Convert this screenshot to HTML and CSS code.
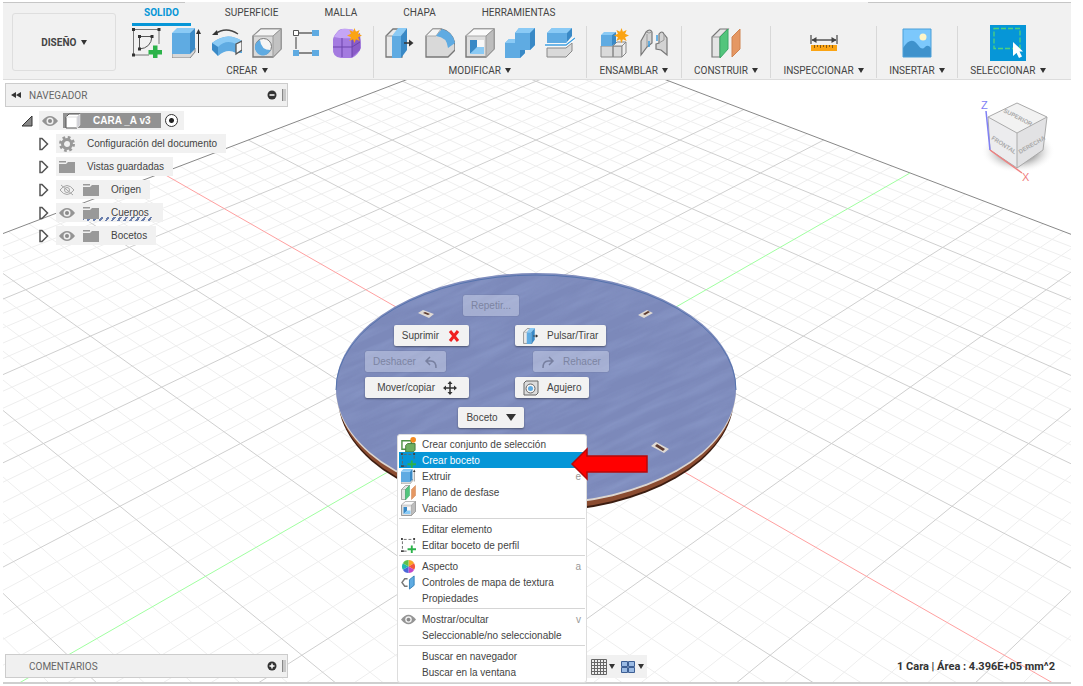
FILE: index.html
```html
<!DOCTYPE html>
<html lang="es">

<head>
  <meta charset="UTF-8">
  <meta name="viewport" content="width=device-width, initial-scale=1.0">

  <title>CARA _A v3</title>
  <link rel="stylesheet" href="styles.css">
</head>

<body>
<!-- Shared icons -->
<svg class="icon-defs" width="0" height="0" aria-hidden="true">
  <symbol id="i-sketch" viewBox="0 0 30 30">
    <path d="M1.500 1.500H27V16M1.500 1.500V27H17" fill="none" stroke="#777"/>
    <path d="M7.500 8.500H20M7.500 8.500V21M20 8.500Q19 20 7.500 21" fill="none" stroke="#555"/>
    <path d="M0 0h3v3H0zM25.500 0h3v3h-3zM0 25.500h3v3H0zM6 7h3v3H6zM18.500 7h3v3h-3zM6 19.500h3v3H6z" fill="#333"/>
    <path d="M21 17.500h4.500V22H30v4.500h-4.500V30H21v-3.500h-4.500V22H21z" fill="#2cb34a"/>
  </symbol>
  <symbol id="i-sketch-small" viewBox="0 0 16 16">
    <path d="M1.500 3.500V13M3 1.500h10M14 3v4M3 14h5" fill="none" stroke="#666" stroke-dasharray="3 2"/>
    <path d="M0 0h2v2H0zM13 0h2v2h-2zM0 13h3v2H0z" fill="#444"/>
    <path d="M10.500 8h2v3H16v2h-3.500V16h-2v-3H7v-2h3.500z" fill="#2cb34a"/>
  </symbol>
  <symbol id="i-extrude" viewBox="0 0 30 30">
    <path d="M0 25h18l5-5v4l-5 6H0z" fill="#d8d8d8" stroke="#888"/>
    <path d="M0 5h18v21H0z" fill="#5fabe2"/>
    <path d="M0 5l5-5h18l-5 5z" fill="#8acaf5"/>
    <path d="M18 5l5-5v21l-5 5z" fill="#3989c6"/>
    <path d="M26.500 25V4" stroke="#333"/>
    <path d="M24 6l2.500-5L29 6z" fill="#333"/>
  </symbol>
  <symbol id="i-hole" viewBox="0 0 30 30">
    <path d="M1 8l8-7h20v20l-8 8H1z" fill="#d9d9d9" stroke="#777" stroke-width="1.400"/>
    <path d="M1 8l8-7h20l-8 7z" fill="#f4f4f4" stroke="#999"/>
    <path d="M21 8l8-7v20l-8 8z" fill="#c2c2c2" stroke="#999"/>
    <circle cx="11.500" cy="18.500" r="8" fill="#f5f5f5" stroke="#777"/>
    <path d="M8 12a8 8 0 1 0 10.500 10Q9 22 8 12z" fill="#5fabe2"/>
  </symbol>
  <symbol id="i-hole-small" viewBox="0 0 16 16">
    <path d="M1 3l2-2h12v12l-2 2H1z" fill="#dcdcdc" stroke="#666"/>
    <circle cx="7.500" cy="8.500" r="4.500" fill="#f5f5f5" stroke="#666"/>
    <circle cx="7.500" cy="8.500" r="2.500" fill="#5fabe2"/>
  </symbol>
  <symbol id="i-press" viewBox="0 0 30 30">
    <path d="M1 8l7-7h9v28H1z" fill="#e9e9e9" stroke="#777" stroke-width="1.300"/>
    <path d="M1 8h7l6-7" fill="none" stroke="#999"/>
    <path d="M7 8h9v22H7z" fill="#5fabe2"/>
    <path d="M7 8l6-8h9l-6 8z" fill="#8acaf5"/>
    <path d="M16 8l6-8v22l-6 8z" fill="#3989c6"/>
    <path d="M19 15h7" stroke="#333" stroke-width="1.500"/>
    <path d="M24 11.500l4.500 3.500-4.500 3.500z" fill="#333"/>
  </symbol>
  <symbol id="i-shell" viewBox="0 0 30 30">
    <path d="M1 8l8-7h20v20l-8 8H1z" fill="#dedede" stroke="#777" stroke-width="1.400"/>
    <path d="M1 8l8-7h20l-8 7z" fill="#fafafa" stroke="#aaa"/>
    <path d="M21 8l8-7v20l-8 8z" fill="#bdbdbd" stroke="#999"/>
    <path d="M5 12h14v14H5z" fill="#f8f8f8"/>
    <path d="M5 12h7v8l-7 6z" fill="#3989c6"/>
    <path d="M12 19h7v7H5z" fill="#8acaf5"/>
  </symbol>
  <symbol id="i-plane" viewBox="0 0 30 30">
    <path d="M1 9l8-8h8L9 9v20H1z" fill="#e4e4e4" stroke="#777" stroke-width="1.200"/>
    <path d="M1 9h8l8-8" fill="none" stroke="#999"/>
    <path d="M9 9l8-8v20l-8 9z" fill="#52c57c" stroke="#3ba866"/>
    <path d="M21 9l8-8v20l-8 8z" fill="#e59763" stroke="#d08350"/>
  </symbol>
  <symbol id="i-eye" viewBox="0 0 16 12">
    <path d="M0 6Q8-4 16 6Q8 16 0 6z" fill="#949494"/>
    <circle cx="8" cy="6" r="3.500" fill="#f0f0f0"/>
    <circle cx="8" cy="6" r="2" fill="#8a8a8a"/>
  </symbol>
  <symbol id="i-eye-off" viewBox="0 0 16 12">
    <path d="M1 6Q8-3 15 6Q8 15 1 6z" fill="none" stroke="#a5a5a5"/>
    <circle cx="8" cy="6" r="2.500" fill="none" stroke="#a5a5a5"/>
    <path d="M2 1l12 10" stroke="#a5a5a5"/>
  </symbol>
  <symbol id="i-folder" viewBox="0 0 16 14">
    <path d="M0 4h7l2-2h7v11H0z" fill="#999"/>
    <path d="M0 1h7v1.500H0z" fill="#999"/>
  </symbol>
  <symbol id="i-expand" viewBox="0 0 12 14">
    <path d="M2 1.500h2L9.500 7 4 12.500H2z" fill="#fff" stroke="#555" stroke-width="1.500"/>
  </symbol>
  <symbol id="i-star" viewBox="0 0 16 16">
    <path d="M8 0l1.500 4L13.500 2l-1.700 4L16 8l-4.200 1.800 1.700 4-4-1.800L8 16l-1.500-4-4 1.800 1.700-4L0 8l4.200-2-1.700-4 4 2z" fill="#fba413"/>
  </symbol>
</svg>

<header class="toolbar">
  <button class="workspace-button">DISEÑO <span class="caret"></span></button>

  <div class="ribbon">
    <nav class="tabs">
      <button class="tab active">SOLIDO</button>
      <button class="tab">SUPERFICIE</button>
      <button class="tab">MALLA</button>
      <button class="tab">CHAPA</button>
      <button class="tab">HERRAMIENTAS</button>
    </nav>

    <div class="groups">
      <div class="group group-wide">
        <div class="tools">
          <button class="tool" aria-label="Crear boceto"><svg><use href="#i-sketch"/></svg></button>
          <button class="tool" aria-label="Extruir"><svg><use href="#i-extrude"/></svg></button>
          <button class="tool" aria-label="Revolución">
            <svg viewBox="0 0 30 30">
              <path d="M0 15Q15 3 30 13V25H24Q15 20 6 28Z" fill="#5fabe2"/>
              <path d="M0 15Q15 3 30 13L24 16Q14 11 6 19Z" fill="#8acaf5"/>
              <path d="M0 15l6 4v9l-6-6z" fill="#3989c6"/>
              <path d="M24 16l6-3v9l-6 4z" fill="#f5f5f5" stroke="#555" stroke-width="1.300"/>
              <path d="M3 6Q14-2 26 6" fill="none" stroke="#444" stroke-width="1.300"/>
              <path d="M0 7l5-5 1 5z" fill="#333"/>
            </svg>
          </button>
          <button class="tool" aria-label="Agujero"><svg><use href="#i-hole"/></svg></button>
          <button class="tool" aria-label="Patrón">
            <svg viewBox="0 0 30 30">
              <path d="M7 5h14M4 9v12M7 25h14" stroke="#666" stroke-width="1.300"/>
              <path d="M1.500 2.500h5v5h-5z" fill="#fff" stroke="#555"/>
              <path d="M20 2h7v6h-7zM1 22h6v6H1zM20 22h7v6h-7z" fill="#5fabe2"/>
            </svg>
          </button>
          <button class="tool" aria-label="Crear forma">
            <svg viewBox="0 0 30 30">
              <path d="M1 11Q2 7 7 2Q10 0 17 1L26 5Q29 10 29 20Q26 27 20 30H9Q0 29 1 20z" fill="#a47be0"/>
              <path d="M2 9Q6 2 10 1h10l7 4-7 5Q10 11 2 9z" fill="#c5a5f5"/>
              <path d="M20 10l8-5q1 8 0 17l-8 7z" fill="#8a5cc8"/>
              <path d="M1 19h19l8-5M10 10v19M20 10v19" fill="none" stroke="#6c45ac"/>
              <use href="#i-star" x="15" y="0" width="15" height="15"/>
            </svg>
          </button>
        </div>
        <button class="group-label">CREAR <span class="caret"></span></button>
      </div>

      <div class="group group-wide">
        <div class="tools">
          <button class="tool" aria-label="Pulsar/Tirar"><svg><use href="#i-press"/></svg></button>
          <button class="tool" aria-label="Empalme">
            <svg viewBox="0 0 30 30">
              <path d="M1 8l7-7h8Q28 4 30 17v5l-7 7H1z" fill="#d9d9d9" stroke="#777" stroke-width="1.300"/>
              <path d="M1 8l7-7h8l-5 7z" fill="#f5f5f5" stroke="#aaa"/>
              <path d="M11 8l6-7Q28 4 30 15l-7 5Q22 9 11 8z" fill="#5fabe2"/>
            </svg>
          </button>
          <button class="tool" aria-label="Vaciado"><svg><use href="#i-shell"/></svg></button>
          <button class="tool" aria-label="Combinar">
            <svg viewBox="0 0 30 30">
              <path d="M0 15l4-4h6V5l4-5h16v17l-5 5h-5v3l-5 5H0z" fill="#5fabe2"/>
              <path d="M0 15l4-4h6v4zM10 5l4-5h16l-5 5z" fill="#8acaf5"/>
              <path d="M25 5l5-5v17l-5 5zM15 22h5v3l-5 5z" fill="#3989c6"/>
            </svg>
          </button>
          <button class="tool" aria-label="Dividir cuerpo">
            <svg viewBox="0 0 30 30">
              <path d="M2 5l5-5h20l-5 5v10H2z" fill="#5fabe2"/>
              <path d="M2 5l5-5h20l-5 5z" fill="#8acaf5"/>
              <path d="M22 5l5-5v8l-5 6z" fill="#3989c6"/>
              <path d="M2 20h19l6-5v8l-6 6H2z" fill="#d9d9d9" stroke="#888"/>
              <path d="M0 17h21l9-7" fill="none" stroke="#fff" stroke-width="3"/>
              <path d="M0 17h21l9-7" fill="none" stroke="#3f9fe0" stroke-width="1.300"/>
            </svg>
          </button>
        </div>
        <button class="group-label">MODIFICAR <span class="caret"></span></button>
      </div>

      <div class="group">
        <div class="tools">
          <button class="tool" aria-label="Nuevo componente">
            <svg viewBox="0 0 30 30">
              <path d="M2 18h12v11H2zM14 18h9v11h-9z" fill="#dadada" stroke="#888"/>
              <path d="M14 18l4-4h9l-4 4zM23 18l4-4v11l-4 4z" fill="#eee" stroke="#888"/>
              <path d="M2 7h11v11H2z" fill="#5fabe2"/>
              <path d="M2 7l3-3h12l-4 3z" fill="#8acaf5"/>
              <path d="M13 7l4-3v11l-4 3z" fill="#3989c6"/>
              <use href="#i-star" x="15" y="0" width="15" height="15"/>
            </svg>
          </button>
          <button class="tool" aria-label="Unión">
            <svg viewBox="0 0 30 30">
              <path d="M2 13L7 4q4-4 6 0v11l-5 4-6 8z" fill="#d3d3d3" stroke="#777" stroke-width="1.200"/>
              <path d="M7 4q3 2 6 0M8 6v13" fill="none" stroke="#999"/>
              <path d="M17 16l3-1V6q3-4 5 0l3 4v17l-6-5-5-1z" fill="#d3d3d3" stroke="#777" stroke-width="1.200"/>
              <path d="M20 15l5-3V6" fill="none" stroke="#999"/>
              <path d="M10 13v6M18 7v6" stroke="#3f9fe0" stroke-width="1.500"/>
            </svg>
          </button>
        </div>
        <button class="group-label">ENSAMBLAR <span class="caret"></span></button>
      </div>

      <div class="group">
        <div class="tools">
          <button class="tool" aria-label="Plano de desfase"><svg><use href="#i-plane"/></svg></button>
        </div>
        <button class="group-label">CONSTRUIR <span class="caret"></span></button>
      </div>

      <div class="group">
        <div class="tools">
          <button class="tool" aria-label="Medir">
            <svg viewBox="0 0 30 30">
              <path d="M2 7v9M28 7v9M3 12h24" stroke="#555" stroke-width="1.300"/>
              <path d="M2.500 12l5-3v6zM27.500 12l-5-3v6z" fill="#444"/>
              <path d="M2 17h26v6H2z" fill="#fba413"/>
              <path d="M5.500 17v3M8.500 17v2M11.500 17v3M14.500 17v2M17.500 17v3M20.500 17v2M23.500 17v3" stroke="#8a5a10"/>
            </svg>
          </button>
        </div>
        <button class="group-label">INSPECCIONAR <span class="caret"></span></button>
      </div>

      <div class="group">
        <div class="tools">
          <button class="tool" aria-label="Insertar imagen">
            <svg viewBox="0 0 30 30">
              <path d="M1 1h28v28H1z" fill="#7cc8fc"/>
              <path d="M1 20Q9 7 16 17q4 6 7 2 3-3 6 1v9H1z" fill="#3f92cc"/>
              <path d="M1 1h28v28H1z" fill="none" stroke="#4b9fd8"/>
              <circle cx="21" cy="9" r="3.500" fill="#fff6c8"/>
            </svg>
          </button>
        </div>
        <button class="group-label">INSERTAR <span class="caret"></span></button>
      </div>

      <div class="group">
        <div class="tools">
          <button class="tool tool-selected" aria-label="Seleccionar">
            <svg viewBox="0 0 36 36">
              <path d="M4 3.500h26v20H4z" fill="none" stroke="#4fd17c" stroke-width="1.300" stroke-dasharray="5 2"/>
              <path d="M23 17v14l3.500-3 2.500 5 3-1.500-2.500-5H33z" fill="#fff"/>
            </svg>
          </button>
        </div>
        <button class="group-label">SELECCIONAR <span class="caret"></span></button>
      </div>
    </div>
  </div>
</header>

<main class="viewport">
  <svg class="scene" viewBox="3 80 1068 602" preserveAspectRatio="xMidYMin slice">
    <defs>
      <!-- wood grain -->
      <filter id="grain" x="0" y="0" width="100%" height="100%">
        <feTurbulence type="fractalNoise" baseFrequency="0.015 0.120" numOctaves="3" seed="4"/>
        <feColorMatrix values="0 0 0 0 0.280  0 0 0 0 0.350  0 0 0 0 0.620  0 1.600 0 0 -0.550"/>
      </filter>
      <clipPath id="disc-clip"><ellipse cx="536" cy="388" rx="200" ry="115"/></clipPath>
    </defs>
    <g id="grid"></g>

    <ellipse cx="536" cy="397" rx="198" ry="115" fill="#3b1c10"/>
    <ellipse cx="536" cy="395" rx="198" ry="115" fill="#8b4c31"/>
    <ellipse cx="536" cy="390" rx="200" ry="115" fill="#ddd6d0"/>
    <ellipse cx="536" cy="388" rx="200" ry="115" fill="#7c89ba"/>
    <g clip-path="url(#disc-clip)">
      <rect x="250" y="180" width="570" height="420" transform="rotate(-24 536 388)" filter="url(#grain)" opacity="0.600"/>
    </g>
    <path d="M336 390A200 115 0 0 1 736 390" fill="none" stroke="#5674ae"/>
    <path d="M418 313l5-3 11 4-5 4zM638 315l9-5 6 3-9 5zM651 446l5-4 13 7-5 4z" fill="#e0dad4"/>
    <path d="M423 313l2-1 5 2-2 1zM643 314l5-3 2 1-5 3zM655 446l2-2 8 5-2 2z" fill="#5d3b30"/>
  </svg>

  <section class="browser">
    <div class="panel-bar">
      <svg class="rewind" viewBox="0 0 10 8"><path d="M5 1v6L0 4zM10 1v6L5 4z" fill="#333"/></svg>
      <span class="panel-title">NAVEGADOR</span>
      <button class="round-button" aria-label="Contraer"><svg viewBox="0 0 10 10"><circle cx="5" cy="5" r="4.500" fill="#333"/><path d="M2.500 5h5" stroke="#fff" stroke-width="1.500"/></svg></button>
      <span class="grip"></span>
    </div>

    <ul class="tree">
      <li class="root">
        <svg class="fold" viewBox="0 0 12 12"><path d="M1 11L11 1v10z" fill="#888" stroke="#333"/></svg>
        <div class="node">
          <svg class="eye"><use href="#i-eye"/></svg>
          <span class="root-name">
            <svg viewBox="0 0 16 16"><path d="M1 4l3-3h11v11l-3 3H1z" fill="#fff" stroke="#555"/><path d="M12 15V4l3-3v11zM1 4h11" fill="#cfcfd6" stroke="#ddd"/></svg>
            CARA _A v3
          </span>
          <input class="activate" type="radio" name="component" aria-label="Activar componente" checked>
        </div>
      </li>
      <li>
        <svg class="fold"><use href="#i-expand"/></svg>
        <div class="node">
          <svg class="gear" viewBox="0 0 16 16"><circle cx="8" cy="8" r="4.500" fill="none" stroke="#999" stroke-width="3"/><circle cx="8" cy="8" r="6.500" fill="none" stroke="#999" stroke-width="3" stroke-dasharray="2.600 2.500"/></svg>
          <span>Configuración del documento</span>
        </div>
      </li>
      <li>
        <svg class="fold"><use href="#i-expand"/></svg>
        <div class="node">
          <svg class="folder"><use href="#i-folder"/></svg>
          <span>Vistas guardadas</span>
        </div>
      </li>
      <li>
        <svg class="fold"><use href="#i-expand"/></svg>
        <div class="node">
          <svg class="eye"><use href="#i-eye-off"/></svg>
          <svg class="folder"><use href="#i-folder"/></svg>
          <span>Origen</span>
        </div>
      </li>
      <li>
        <svg class="fold"><use href="#i-expand"/></svg>
        <div class="node">
          <svg class="eye"><use href="#i-eye"/></svg>
          <span class="hatched">
            <svg class="folder"><use href="#i-folder"/></svg>
            <span>Cuerpos</span>
          </span>
        </div>
      </li>
      <li>
        <svg class="fold"><use href="#i-expand"/></svg>
        <div class="node">
          <svg class="eye"><use href="#i-eye"/></svg>
          <svg class="folder"><use href="#i-folder"/></svg>
          <span>Bocetos</span>
        </div>
      </li>
    </ul>
  </section>

  <svg class="view-cube" viewBox="0 0 80 90">
    <defs>
      <radialGradient id="cube-shadow"><stop offset="0.500" stop-color="#999"/><stop offset="1" stop-color="#fff" stop-opacity="0"/></radialGradient>
    </defs>
    <ellipse cx="41" cy="56" rx="37" ry="22" fill="url(#cube-shadow)" opacity="0.800"/>
    <path d="M40 8l30 14-30 16-29-16z" fill="#f2f2f2"/>
    <path d="M11 22l29 16v35L13 55z" fill="#ececee"/>
    <path d="M40 38l30-16-4 33-26 18z" fill="#e2e2e4"/>
    <path d="M40 8l30 14-30 16-29-16zM40 38v35L13 55 11 22M40 73l26-18 4-33" fill="none" stroke="#aaa"/>
    <path d="M9 16l4 39" stroke="#8080f5" stroke-width="1.500"/>
    <path d="M13 55l32 23" stroke="#f08080" stroke-width="1.500"/>
    <g class="cube-face">
      <text transform="translate(26 17) rotate(27)">SUPERIOR</text>
      <text transform="translate(14 44) rotate(33)">FRONTAL</text>
      <text transform="translate(43 59) rotate(-30)">DERECHA</text>
    </g>
    <text class="axis-z" x="4" y="14">Z</text>
    <text class="axis-x" x="45" y="86">X</text>
  </svg>

  <div class="marking-menu">
    <button class="mark mark-center" disabled>Repetir...</button>
    <button class="mark mark-right">Suprimir <svg viewBox="0 0 14 14"><path d="M3 2l8 10M11 2L3 12" stroke="#f02020" stroke-width="3"/></svg></button>
    <button class="mark"><svg class="mark-icon"><use href="#i-press"/></svg> Pulsar/Tirar</button>
    <button class="mark" disabled>Deshacer <svg viewBox="0 0 14 14"><path d="M6 2L2 6l4 4M2 6h5q5 0 5 7" fill="none" stroke="#777f9f" stroke-width="1.500"/></svg></button>
    <button class="mark mark-indent" disabled><svg viewBox="0 0 14 14"><path d="M8 2l4 4-4 4M12 6H7q-5 0-5 7" fill="none" stroke="#777f9f" stroke-width="1.500"/></svg> Rehacer</button>
    <button class="mark mark-right mark-wide">Mover/copiar <svg viewBox="0 0 14 14"><path d="M7 2v10M2 7h10" stroke="#333" stroke-width="1.500"/><path d="M4.500 3L7 0l2.500 3zM4.500 11L7 14l2.500-3zM3 4.500L0 7l3 2.500zM11 4.500L14 7l-3 2.500z" fill="#333"/></svg></button>
    <button class="mark"><svg class="mark-icon"><use href="#i-hole-small"/></svg> Agujero</button>
    <button class="mark mark-center">Boceto <span class="caret caret-big"></span></button>
  </div>

  <div class="context-menu" role="menu">
    <button role="menuitem">
      <svg viewBox="0 0 16 16"><path d="M1 4h10v9H1z" fill="none" stroke="#4d8f45" stroke-width="1.500"/><path d="M5 9l2-2h8v7l-2 2H5z" fill="#6fae60" stroke="#447a3b"/><circle cx="13" cy="3" r="3" fill="#f58a1f"/></svg>
      Crear conjunto de selección
    </button>
    <button role="menuitem" class="highlighted"><svg><use href="#i-sketch-small"/></svg>Crear boceto</button>
    <button role="menuitem"><svg><use href="#i-extrude"/></svg>Extruir<kbd>e</kbd></button>
    <button role="menuitem"><svg><use href="#i-plane"/></svg>Plano de desfase</button>
    <button role="menuitem"><svg><use href="#i-shell"/></svg>Vaciado</button>
    <hr>
    <button role="menuitem" class="no-icon">Editar elemento</button>
    <button role="menuitem"><svg><use href="#i-sketch-small"/></svg>Editar boceto de perfil</button>
    <hr>
    <button role="menuitem">
      <svg viewBox="0 0 16 16"><path d="M8 8V1a7 7 0 0 1 6 3.500z" fill="#f9a825"/><path d="M8 8l6-3.500a7 7 0 0 1 0 7z" fill="#f4573b"/><path d="M8 8l6 3.500A7 7 0 0 1 8 15z" fill="#c147c9"/><path d="M8 8v7a7 7 0 0 1-6-3.500z" fill="#4b66d8"/><path d="M8 8l-6 3.500a7 7 0 0 1 0-7z" fill="#22b8b0"/><path d="M8 8L2 4.500A7 7 0 0 1 8 1z" fill="#5fc04a"/></svg>
      Aspecto<kbd>a</kbd>
    </button>
    <button role="menuitem">
      <svg viewBox="0 0 16 16"><path d="M7 4H4L1 8l3 4h3" fill="none" stroke="#777" stroke-width="1.500"/><path d="M9 5l5-4v10l-5 4z" fill="#5fabe2" stroke="#3280b8"/></svg>
      Controles de mapa de textura
    </button>
    <button role="menuitem" class="no-icon">Propiedades</button>
    <hr>
    <button role="menuitem"><svg><use href="#i-eye"/></svg>Mostrar/ocultar<kbd>v</kbd></button>
    <button role="menuitem" class="no-icon">Seleccionable/no seleccionable</button>
    <hr>
    <button role="menuitem" class="no-icon">Buscar en navegador</button>
    <button role="menuitem" class="no-icon">Buscar en la ventana</button>
  </div>

  <svg class="pointer-arrow" viewBox="0 0 80 34"><path d="M2 17L17 2v7h60v16H17v7z" fill="#f00" stroke="#b80808" stroke-width="1.500"/></svg>

  <footer class="bottom-bar">
    <div class="panel-bar comments">
      <span class="panel-title">COMENTARIOS</span>
      <button class="round-button" aria-label="Añadir comentario"><svg viewBox="0 0 10 10"><circle cx="5" cy="5" r="4.500" fill="#333"/><path d="M2.500 5h5M5 2.500v5" stroke="#fff" stroke-width="1.500"/></svg></button>
      <span class="grip"></span>
    </div>
    <div class="display-bar">
      <button aria-label="Rejilla"><svg viewBox="0 0 16 16"><path d="M1 1h14v14H1z" fill="#eee"/><path d="M.5.5h15v15H.5zM1 3.500h14M1 6.500h14M1 9.500h14M1 12.500h14M3.500 1v14M6.500 1v14M9.500 1v14M12.500 1v14" fill="none" stroke="#666"/></svg><span class="caret"></span></button>
      <button aria-label="Ventanas gráficas"><svg viewBox="0 0 16 16"><path d="M1.500 2.500h6v5h-6zM8.500 2.500h6v5h-6zM1.500 8.500h6v5h-6zM8.500 8.500h6v5h-6z" fill="#9bbbe4" stroke="#3d5f94"/></svg><span class="caret"></span></button>
    </div>
    <p class="selection-info">1 Cara | Área : 4.396E+05 mm^2</p>
  </footer>
</main>

<script>
  // Ground grid, drawn in perspective. u and v run from -5 to 5 in major cells
  const SIZE = 5;
  const STEPS = 5;

  function project(u, v) {
    const depth = -3 - (u + v);
    const cell = 1 / (0.004539 - 0.000268 * depth);
    return [536 + cell * (u - v) / 2, -681 + 5.707 * cell];
  }

  function line(u1, v1, u2, v2, name) {
    const [x1, y1] = project(u1, v1);
    const [x2, y2] = project(u2, v2);
    return `<line class="${name}" x1="${x1}" y1="${y1}" x2="${x2}" y2="${y2}"/>`;
  }

  let minor = "";
  let major = "";
  for (let i = -SIZE * STEPS; i <= SIZE * STEPS; i++) {
    const t = i / STEPS;
    if (i === 0) continue;
    if (i % STEPS) {
      minor += line(t, -SIZE, t, SIZE, "minor") + line(-SIZE, t, SIZE, t, "minor");
    } else {
      const name = Math.abs(t) === SIZE ? "edge" : "major";
      major += line(t, -SIZE, t, SIZE, name) + line(-SIZE, t, SIZE, t, name);
    }
  }
  document.getElementById("grid").innerHTML = minor + major +
    line(0, -SIZE, 0, SIZE, "axis-red") + line(-SIZE, 0, SIZE, 0, "axis-green");
</script>
</body>

</html>
```
FILE: styles.css
```css
* {
  box-sizing: border-box;
}

body {
  display: flex;
  flex-direction: column;
  height: 100vh;
  margin: 0;
  padding: 2px 12px 2px 3px;
  overflow: hidden;
  background-color: white;
  color: #444;
  font-family: "Liberation Sans", Arial, sans-serif;
  font-size: 10px;
}

button {
  padding: 0;
  border: none;
  background: none;
  color: inherit;
  font: inherit;
  white-space: nowrap;
  cursor: pointer;
}

svg {
  display: block;
  flex: none;
}

.icon-defs {
  position: absolute;
}

.caret {
  display: inline-block;
  margin-left: 2px;
  border: 3px solid transparent;
  border-top: 5px solid #333;
  border-bottom: none;
  vertical-align: 1px;
}

.caret-big {
  margin: 0;
  border-width: 7px 5px 0;
}

/* Toolbar */
.toolbar {
  display: flex;
  flex: none;
  gap: 16px;
  padding: 1px 9px 1px;
  border-bottom: 1px solid #dcdcdc;
  background: linear-gradient(to right, #c6c6c6 17%, #f1f1f1 17%, #f1f1f1 81%, #c6c6c6 81%) top / 100% 1px no-repeat #f1f1f1;
  font-family: Roboto, sans-serif;
}

.workspace-button {
  width: 104px;
  height: 58px;
  margin-top: 10px;
  border: 1px solid #dedede;
  border-radius: 3px;
  font-weight: bold;
}

.tabs {
  display: flex;
  gap: 22px;
}

.tab {
  padding: 0 12px;
  border-bottom: 3px solid transparent;
  line-height: 20px;
}

.tab.active {
  border-color: #0696d7;
  color: #0696d7;
  font-weight: bold;
}

.groups {
  display: flex;
}

.group {
  display: flex;
  flex-direction: column;
  align-items: center;
  padding: 2px 12px 0;
  border-right: 1px solid #d8d8d8;
}

.group-wide {
  padding: 2px 11px 0;
}

.group:first-child {
  padding-left: 0;
}

.group:last-child {
  border-right: none;
}

.tools {
  display: flex;
  align-items: center;
  gap: 10px;
  height: 30px;
}

.tool svg {
  width: 30px;
  height: 30px;
}

.tool-selected svg {
  width: 36px;
  height: 36px;
  background-color: #0696d7;
}

.group-label {
  margin-top: 6px;
  line-height: 14px;
}

/* Canvas */
.viewport {
  position: relative;
  flex: 1;
  min-height: 0;
  border-bottom: 2px solid #cfcfcf;
}

.scene {
  position: absolute;
  width: 100%;
  height: 100%;
}

.minor {
  stroke: #eee;
}

.major {
  stroke: #cfcfcf;
}

.edge {
  stroke: #888;
}

.axis-red {
  stroke: #ffa0a0;
}

.axis-green {
  stroke: #a0ffa0;
}

/* Browser panel */
.browser {
  position: relative;
  width: 285px;
  padding: 3px 0 0 2px;
}

.panel-bar {
  display: flex;
  align-items: center;
  width: 283px;
  height: 24px;
  padding: 0 1px 0 5px;
  border: 1px solid #ccc;
  background-color: #f0f0f0;
  font-family: Roboto, sans-serif;
  color: #666;
}

.rewind {
  width: 10px;
  height: 8px;
}

.panel-title {
  margin-left: 8px;
}

.comments .panel-title {
  margin-left: 18px;
}

.round-button {
  margin-left: auto;
}

.round-button svg {
  width: 10px;
  height: 10px;
}

.grip {
  width: 4px;
  height: 12px;
  margin-left: 5px;
  border-left: 1px solid #888;
  background-color: #c8c8c8;
}

.tree {
  display: flex;
  flex-direction: column;
  gap: 4px;
  margin: 4px 0 0;
  padding: 0;
  list-style: none;
}

.tree li {
  display: flex;
  align-items: center;
  gap: 6px;
  padding-left: 33px;
}

.tree .root {
  padding-left: 16px;
}

.fold {
  width: 12px;
  height: 14px;
}

.node {
  display: flex;
  align-items: center;
  height: 19px;
  padding: 0 9px 0 3px;
  background-color: #f1f1f1;
}

.root .node {
  padding-right: 6px;
}

.node > span:last-child {
  margin-left: 12px;
}

.eye {
  width: 16px;
  height: 12px;
}

.gear {
  width: 16px;
  height: 16px;
}

.folder {
  width: 16px;
  height: 14px;
}

.eye + .folder {
  margin-left: 8px;
}

.node .hatched {
  display: flex;
  align-items: center;
  gap: 12px;
  height: 17px;
  padding-right: 5px;
  background: repeating-linear-gradient(125deg, #6a7fae 0 2px, transparent 2px 5px) bottom / 100% 4px no-repeat;
}

.node > .hatched:last-child {
  margin-left: 8px;
}

.root-name {
  display: flex;
  align-items: center;
  gap: 12px;
  height: 15px;
  margin: 0 4px 0 5px;
  padding: 0 10px 0 2px;
  background-color: #929292;
  color: white;
  font-weight: bold;
}

.root-name svg {
  width: 16px;
  height: 16px;
}

.activate {
  appearance: none;
  width: 13px;
  height: 13px;
  margin: 0;
  border: 1px solid #333;
  border-radius: 50%;
  background: radial-gradient(#222 2px, white 3px);
}

/* View cube */
.view-cube {
  position: absolute;
  top: 15px;
  right: 14px;
  width: 80px;
  height: 90px;
}

.cube-face {
  fill: #aaa;
  font-size: 6px;
  font-weight: bold;
}

.axis-z {
  fill: #8080f5;
  font-size: 11px;
}

.axis-x {
  fill: #f08080;
  font-size: 11px;
}

/* Marking menu */
.marking-menu {
  position: absolute;
  top: 215px;
  left: 362px;
  display: grid;
  grid-template-columns: 104px 102px;
  gap: 5px 46px;
  align-items: center;
  justify-items: start;
}

.mark {
  display: flex;
  align-items: center;
  gap: 8px;
  height: 21px;
  padding: 0 8px;
  border-radius: 2px;
  background-color: #f2f2f2;
  box-shadow: 0 1px 2px rgba(0, 0, 0, 0.4);
}

.mark:disabled {
  background-color: rgba(225, 230, 245, 0.4);
  box-shadow: 0 0 1px rgba(0, 0, 0, 0.4);
  color: #7c84a2;
}

.mark svg {
  width: 14px;
  height: 14px;
}

.mark .mark-icon {
  width: 16px;
  height: 16px;
}

.mark-center {
  grid-column: 1 / 3;
  justify-self: center;
  margin: 0 0 4px;
}

.mark-center:last-child {
  margin: 4px 0 0;
}

.mark-right {
  justify-self: end;
}

.mark-wide {
  padding: 0 12px;
}

.mark-indent {
  margin-left: 18px;
}

/* Context menu */
.context-menu {
  position: absolute;
  top: 354px;
  left: 394px;
  width: 190px;
  padding: 1px 1px 2px;
  border: 1px solid #ddd;
  border-radius: 3px;
  background-color: white;
}

.context-menu button {
  display: flex;
  align-items: center;
  gap: 6px;
  width: 100%;
  height: 16px;
  padding: 0 4px 0 2px;
}

.context-menu svg {
  width: 15px;
  height: 15px;
}

.context-menu .no-icon {
  padding-left: 23px;
}

.context-menu .highlighted {
  background-color: #0696d7;
  color: white;
}

.context-menu kbd {
  margin-left: auto;
  color: #999;
  font: inherit;
}

.context-menu hr {
  margin: 2px 0;
  border: none;
  border-top: 1px solid #d5d5d5;
}

.pointer-arrow {
  position: absolute;
  top: 367px;
  left: 567px;
  width: 80px;
  height: 34px;
}

/* Bottom bar */
.bottom-bar {
  position: absolute;
  right: 0;
  bottom: 4px;
  left: 0;
  display: flex;
  align-items: center;
  padding: 0 16px 0 2px;
}

.display-bar {
  display: flex;
  gap: 5px;
  margin-left: 299px;
  padding: 4px 3px 3px 4px;
  background-color: #f1f1f1;
}

.display-bar button {
  display: flex;
  align-items: center;
}

.display-bar svg {
  width: 16px;
  height: 16px;
}

.selection-info {
  margin: 0 0 0 auto;
  color: #333;
  font-family: Roboto, sans-serif;
  font-size: 11px;
  font-weight: bold;
}
```
